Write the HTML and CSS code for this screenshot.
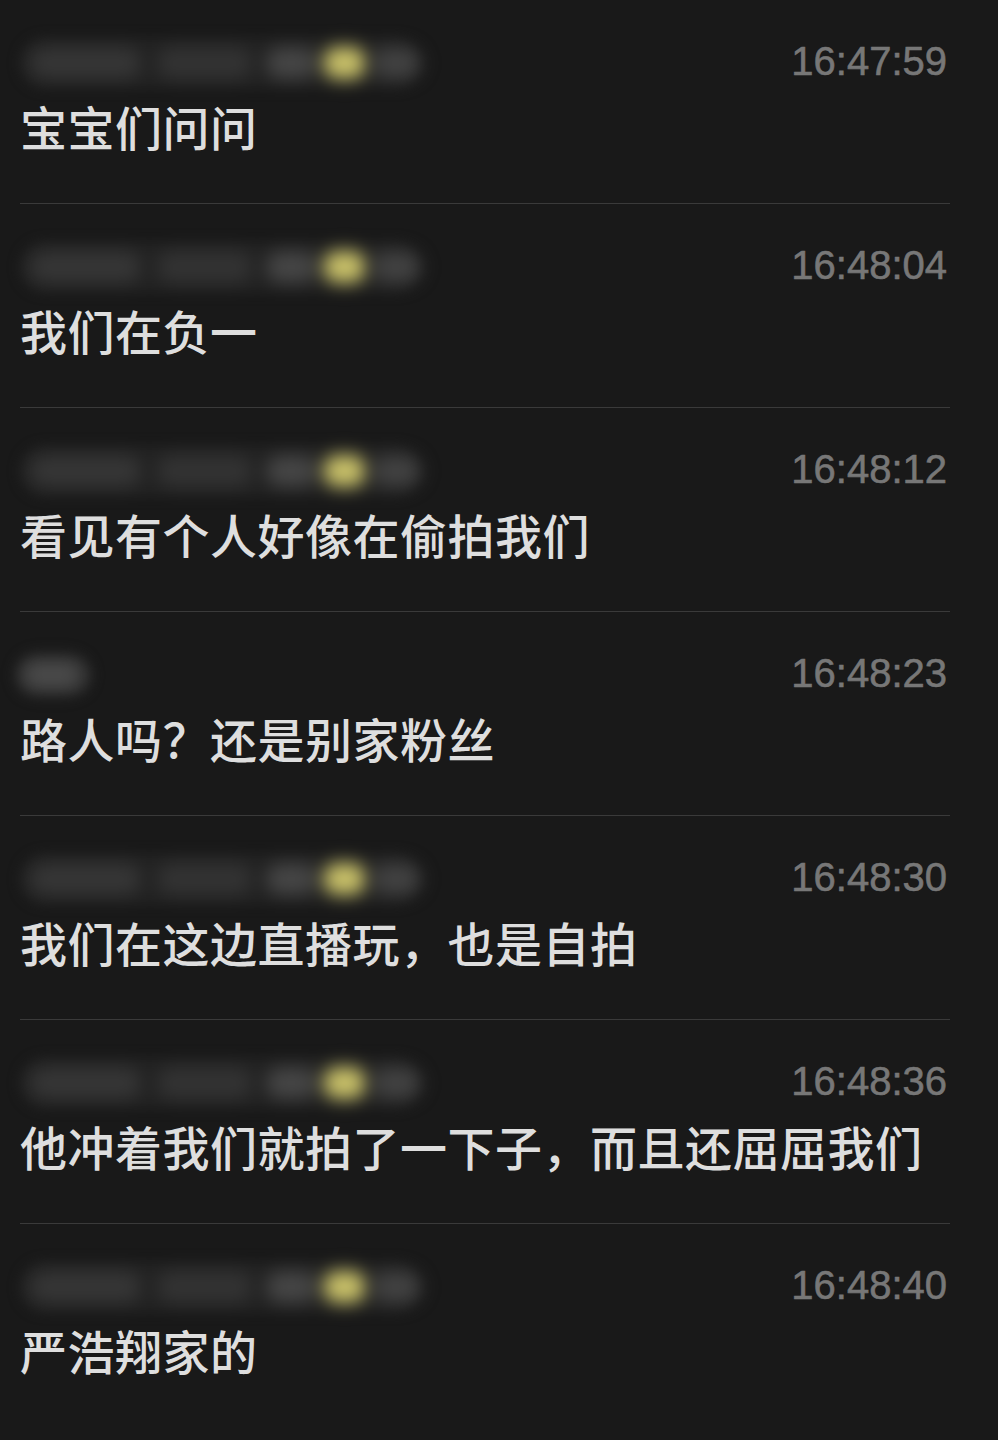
FILE: index.html
```html
<!DOCTYPE html>
<html lang="zh-CN">
<head>
    <meta charset="UTF-8">
    <meta name="viewport" content="width=device-width, initial-scale=1.0">
    <title>聊天记录</title>
    <link rel="stylesheet" href="styles.css">
</head>
<body>
    <div class="chat">
        <!-- 1 -->
        <div class="msg">
            <div class="msg-head">
                <div class="name">
                    <span class="blot w120"></span>
                    <span class="blot w110"></span>
                    <span class="blot w70"></span>
                    <span class="blot yellow"></span>
                    <span class="blot w60"></span>
                </div>
                <span class="time">16:47:59</span>
            </div>
            <div class="text">宝宝们问问</div>
        </div>

        <!-- 2 -->
        <div class="msg">
            <div class="msg-head">
                <div class="name">
                    <span class="blot w120"></span>
                    <span class="blot w110"></span>
                    <span class="blot w70"></span>
                    <span class="blot yellow"></span>
                    <span class="blot w60"></span>
                </div>
                <span class="time">16:48:04</span>
            </div>
            <div class="text">我们在负一</div>
        </div>

        <!-- 3 -->
        <div class="msg">
            <div class="msg-head">
                <div class="name">
                    <span class="blot w120"></span>
                    <span class="blot w110"></span>
                    <span class="blot w70"></span>
                    <span class="blot yellow"></span>
                    <span class="blot w60"></span>
                </div>
                <span class="time">16:48:12</span>
            </div>
            <div class="text">看见有个人好像在偷拍我们</div>
        </div>

        <!-- 4 -->
        <div class="msg">
            <div class="msg-head">
                <div class="name short">
                    <span class="blot w70"></span>
                </div>
                <span class="time">16:48:23</span>
            </div>
            <div class="text">路人吗？还是别家粉丝</div>
        </div>

        <!-- 5 -->
        <div class="msg">
            <div class="msg-head">
                <div class="name">
                    <span class="blot w120"></span>
                    <span class="blot w110"></span>
                    <span class="blot w70"></span>
                    <span class="blot yellow"></span>
                    <span class="blot w60"></span>
                </div>
                <span class="time">16:48:30</span>
            </div>
            <div class="text">我们在这边直播玩，也是自拍</div>
        </div>

        <!-- 6 -->
        <div class="msg">
            <div class="msg-head">
                <div class="name">
                    <span class="blot w120"></span>
                    <span class="blot w110"></span>
                    <span class="blot w70"></span>
                    <span class="blot yellow"></span>
                    <span class="blot w60"></span>
                </div>
                <span class="time">16:48:36</span>
            </div>
            <div class="text">他冲着我们就拍了一下子，而且还屈屈我们</div>
        </div>

        <!-- 7 -->
        <div class="msg">
            <div class="msg-head">
                <div class="name">
                    <span class="blot w120"></span>
                    <span class="blot w110"></span>
                    <span class="blot w70"></span>
                    <span class="blot yellow"></span>
                    <span class="blot w60"></span>
                </div>
                <span class="time">16:48:40</span>
            </div>
            <div class="text">严浩翔家的</div>
        </div>
    </div>
</body>
</html>
```

FILE: styles.css
```css
body {
    margin: 0;
    padding: 0;
    background-color: #191919;
    font-family: "Noto Sans CJK SC", "Noto Sans", sans-serif;
    height: 1440px;
    overflow: hidden;
}

.chat {
    margin: 0 48px 0 20px;
}

.msg {
    padding: 37px 0 47px;
    border-bottom: 1px solid #3a3a3a;
}

.msg:last-child {
    border-bottom: none;
}

.msg-head {
    display: flex;
    justify-content: space-between;
    align-items: center;
    height: 48px;
    margin-bottom: 11px;
}

.name {
    display: flex;
    align-items: center;
    width: 400px;
    height: 50px;
    margin-top: 4px;
    border-radius: 25px;
    background-color: #232323;
    filter: blur(6px);
}

.name.short {
    width: 76px;
    height: 40px;
    margin-left: -4px;
    background-color: #2a2a2a;
}

.blot {
    display: block;
    height: 30px;
    border-radius: 15px;
    background-color: #363636;
    filter: blur(7px);
}

.w120 { width: 130px; margin-left: 10px; }
.w110 { width: 110px; margin-left: 16px; background-color: #333; }
.w70 { width: 60px; margin-left: 14px; background-color: #464646; }
.w60 { width: 56px; margin-left: 6px; background-color: #424242; }

.name.short .w70 {
    margin-left: 6px;
    background-color: #4a4a4a;
}

.blot.yellow {
    width: 50px;
    height: 32px;
    margin-left: 6px;
    background-color: #cbc36a;
}

.time {
    font-family: "Liberation Sans", Arial, sans-serif;
    font-size: 40px;
    line-height: 48px;
    color: #777777;
    -webkit-text-stroke: 0.6px #777777;
    margin-right: 3px;
}

.text {
    font-size: 47px;
    line-height: 60px;
    letter-spacing: 0.5px;
    color: #dedede;
    font-weight: 500;
    white-space: nowrap;
}
```
